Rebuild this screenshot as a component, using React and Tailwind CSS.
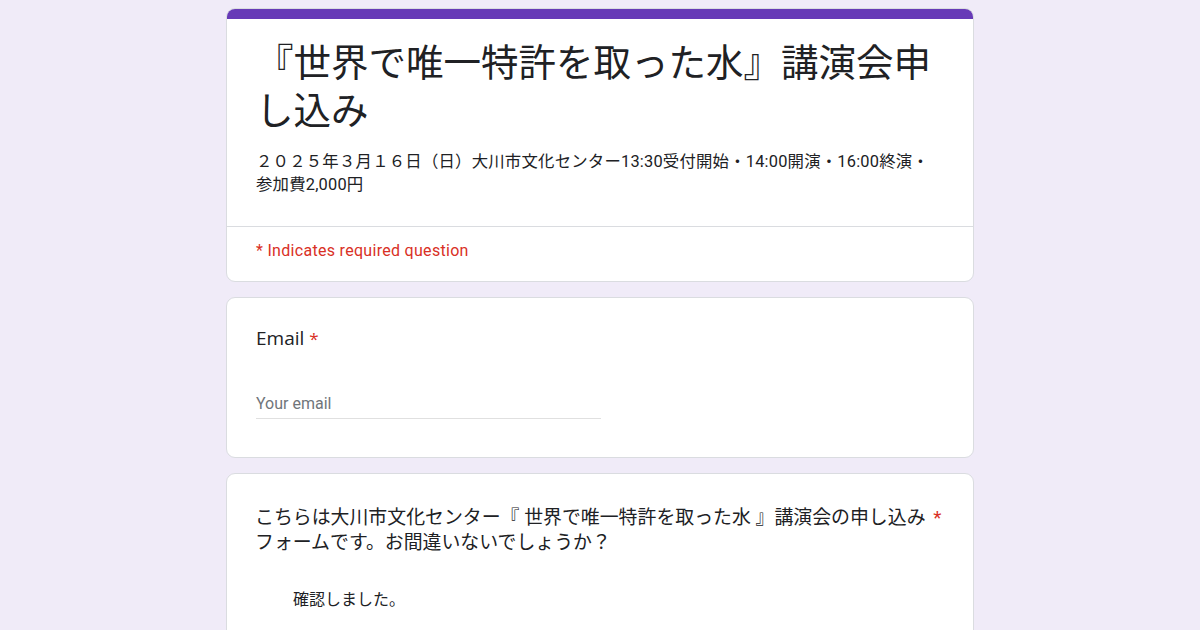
export default function App() {
  const jp = { fontFamily: 'Roboto, "Noto Sans CJK JP", sans-serif' };
  return (
    <div className="min-h-screen w-full bg-[#f0ebf8] flex flex-col items-center pt-2 gap-[15px]" style={jp}>
      <div className="w-[748px] bg-white rounded-[9px] border border-[#dadce0] overflow-hidden shrink-0">
        <div className="h-[10px] bg-[#673ab7]" />
        <div className="px-[29px] pt-[17px] pb-[30px]">
          <h1 className="text-[37.5px] leading-[48px] text-[#202124]" style={{ fontFamily: '"Noto Sans CJK JP", sans-serif' }}>
            『世界で唯一特許を取った水』講演会申し込み
          </h1>
          <p className="mt-[18px] text-[16.4px] leading-[23px] tracking-[0.2px] text-[#202124] pr-[12px]">
            ２０２５年３月１６日（日）大川市文化センター13:30受付開始・14:00開演・16:00終演・参加費2,000円
          </p>
        </div>
        <div className="border-t border-[#dadce0] px-[29px] pt-[14px] pb-[20px]">
          <p className="text-[16px] leading-[20px] tracking-[0.3px] text-[#d93025]" style={{ fontFamily: 'Roboto, sans-serif' }}>
            * Indicates required question
          </p>
        </div>
      </div>

      <div className="w-[748px] bg-white rounded-[9px] border border-[#dadce0] shrink-0 px-[29px] pt-[28px] pb-[38px]">
        <div className="text-[19px] leading-[24px] text-[#202124]" style={{ fontFamily: '"Open Sans", Roboto, sans-serif' }}>
          Email <span className="text-[#d93025] text-[17px]">*</span>
        </div>
        <div className="mt-[41px] w-[345px] border-b border-[#e0e0e0] pb-[2px]">
          <span className="text-[16px] leading-[20px] text-[#70757a]" style={{ fontFamily: 'Roboto, sans-serif' }}>Your email</span>
        </div>
      </div>

      <div className="w-[748px] bg-white rounded-[9px] border border-[#dadce0] shrink-0 px-[28px] pt-[31px] pb-[40px]">
        <div className="text-[18.9px] leading-[25px] text-[#202124]">
          こちらは大川市文化センター『 世界で唯一特許を取った水 』講演会の申し込み <span className="ml-[3px] text-[#d93025]">*</span>
          <br />
          フォームです。お間違いないでしょうか？
        </div>
        <div className="mt-[35px] pl-[38px] text-[16px] leading-[20px] text-[#202124]">
          確認しました。
        </div>
      </div>
    </div>
  );
}
